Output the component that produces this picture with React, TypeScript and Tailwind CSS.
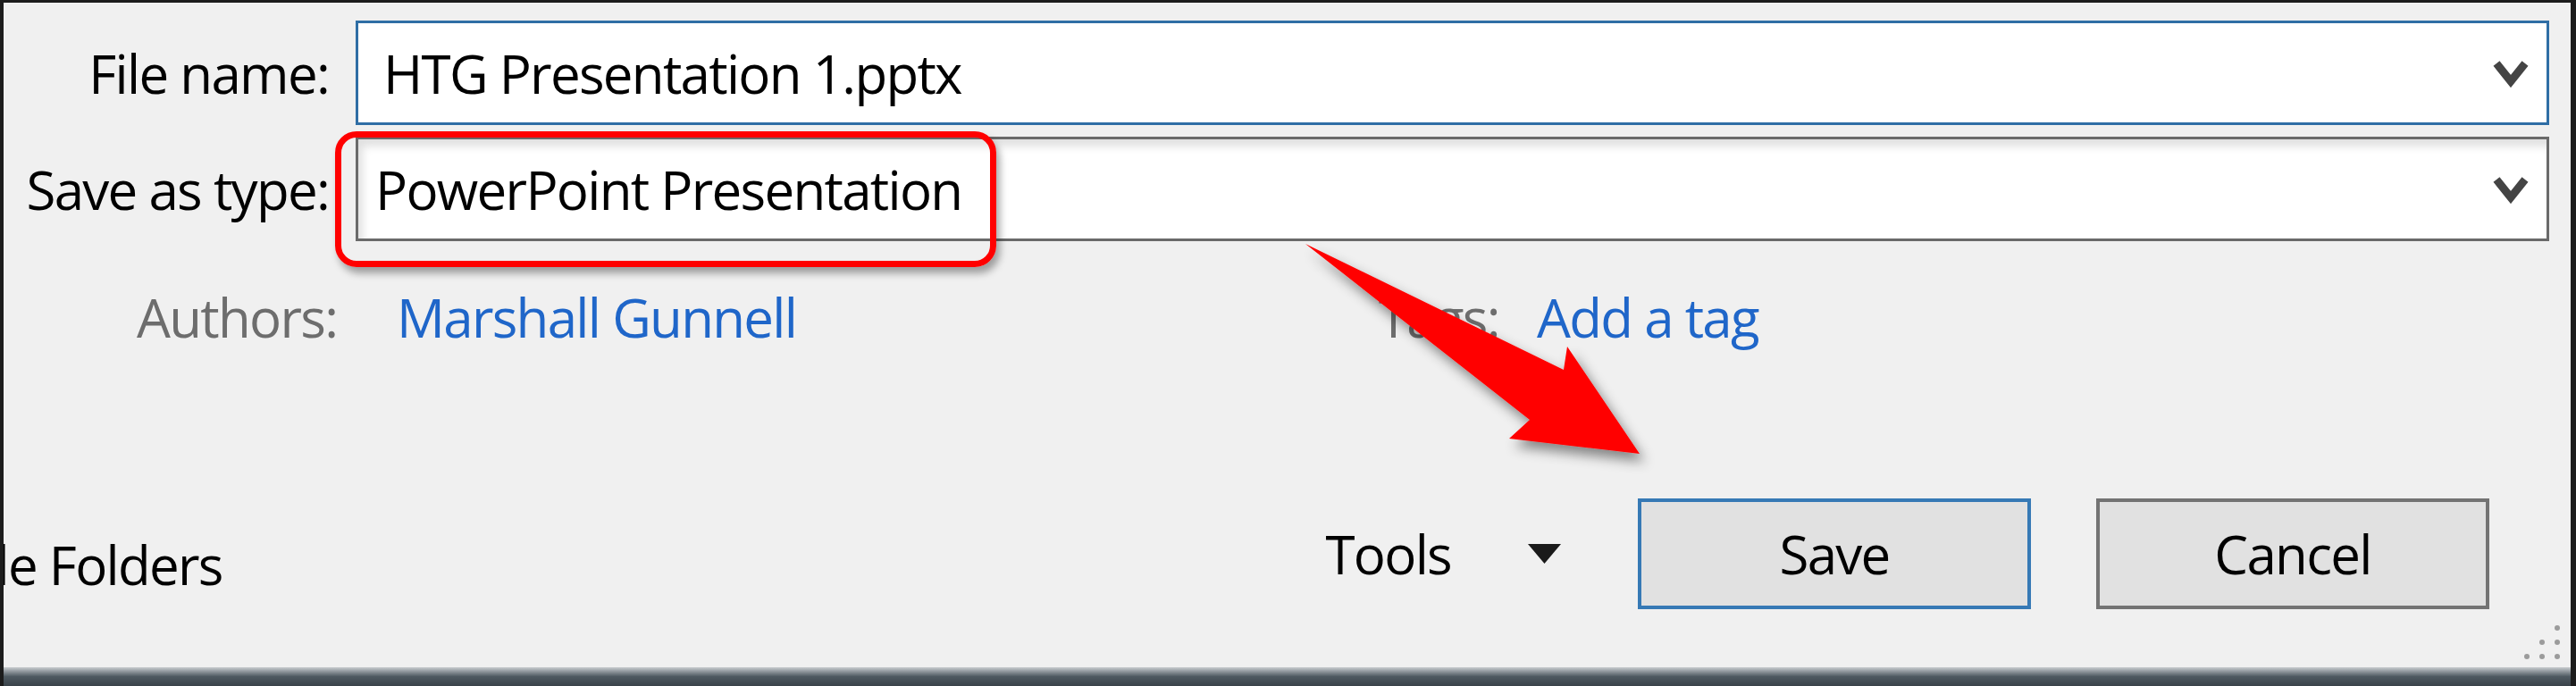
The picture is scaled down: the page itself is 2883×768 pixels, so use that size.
import { ReactNode } from 'react';

const font = "font-['Open_Sans',sans-serif] font-medium text-[60px] leading-none tracking-[-1.7px]";

function Chevron() {
  return (
    <svg width="40" height="32" viewBox="0 0 40 32" className="shrink-0">
      <polyline points="4,5 20,25 36,5" fill="none" stroke="#444" strokeWidth="9" strokeLinejoin="miter" />
    </svg>
  );
}

interface FieldRowProps {
  label: string;
  children: ReactNode;
  focused?: boolean;
  className?: string;
  textPad: string;
}

function FieldRow({ label, children, focused, className, textPad }: FieldRowProps) {
  return (
    <div className={`flex h-[117px] items-center gap-[30px] pr-[24px] ${className ?? ''}`}>
      <div className={`w-[364px] shrink-0 text-right text-black ${font}`}>{label}</div>
      <div
        className={`flex h-full flex-1 items-center bg-white pr-[20px] ${textPad} ${
          focused
            ? 'border-[3px] border-[#2f6ea5]'
            : 'border-[3px] border-[#6a6a6a] shadow-[inset_5px_8px_10px_rgba(0,0,0,0.12)]'
        }`}
      >
        <span className={`flex-1 text-black ${font}`}>{children}</span>
        <Chevron />
      </div>
    </div>
  );
}

function Dot() {
  return <span className="h-[6px] w-[6px] rounded-full bg-[#9b9b9b]" />;
}

export default function App() {
  return (
    <div className="relative flex h-[768px] w-[2883px] flex-col overflow-hidden border-t-[3px] border-l-[4px] border-r-[6px] border-[#1c1c1c] bg-[#f0f0f0]">
      <div className="flex flex-1 flex-col overflow-hidden pt-[20px]">
        <FieldRow label="File name:" focused textPad="pl-[28px]">
          HTG Presentation 1.pptx
        </FieldRow>
        <FieldRow label="Save as type:" className="mt-[13px]" textPad="pl-[19px]">
          PowerPoint Presentation
        </FieldRow>

        {/* properties */}
        <div className={`mt-[55px] flex h-[60px] items-center pl-[149px] ${font}`}>
          <span className="w-[291px] shrink-0 text-[#6d6d6d]">Authors:</span>
          <span className="w-[1099px] shrink-0 text-[#1f66c9]">Marshall Gunnell</span>
          <span className="w-[177px] shrink-0 text-[#6d6d6d]">Tags:</span>
          <span className="text-[#1f66c9]">Add a tag</span>
        </div>

        {/* buttons */}
        <div className="mt-[173px] flex h-[124px] items-center pr-[91px]">
          <div className={`-ml-[86px] whitespace-nowrap pt-[24px] text-black ${font}`}>Hide Folders</div>
          <div className="flex-1" />
          <span className={`text-black ${font}`}>Tools</span>
          <svg width="37" height="22" viewBox="0 0 37 22" className="ml-[86px] shrink-0">
            <polygon points="0,0 37,0 18.5,22" fill="#1a1a1a" />
          </svg>
          <button className={`ml-[86px] h-[124px] w-[440px] shrink-0 border-[4px] border-[#3679b5] bg-[#e1e1e1] text-black ${font}`}>
            Save
          </button>
          <button className={`ml-[73px] h-[124px] w-[440px] shrink-0 border-[4px] border-[#737373] bg-[#e1e1e1] text-black ${font}`}>
            Cancel
          </button>
        </div>

        {/* size grip */}
        <div className="mt-[18px] flex justify-end pr-[12px]">
          <div className="grid grid-cols-3 gap-x-[11px] gap-y-[10px]">
            <span />
            <span />
            <Dot />
            <span />
            <Dot />
            <Dot />
            <Dot />
            <Dot />
            <Dot />
          </div>
        </div>
      </div>

      <div className="h-[21px] shrink-0 bg-linear-to-b from-[#c9cdd0] via-[#4e5961] to-[#3a434a]" />

      {/* annotation: red highlight box */}
      <div className="pointer-events-none absolute left-[371px] top-[144px] h-[152px] w-[740px] rounded-[24px] border-[7px] border-[#ff0000] shadow-[4px_7px_9px_rgba(0,0,0,0.35)]" />

      {/* annotation: red arrow */}
      <svg
        className="pointer-events-none absolute left-[-4px] top-[-3px]"
        width="2883"
        height="768"
        viewBox="0 0 2883 768"
      >
        <defs>
          <filter id="arrowShadow" x="-20%" y="-20%" width="140%" height="140%">
            <feDropShadow dx="6" dy="9" stdDeviation="7" floodColor="#000" floodOpacity="0.45" />
          </filter>
        </defs>
        <polygon
          points="1461,273 1750,414 1754,388 1835,508 1689,491 1712,470"
          fill="#ff0000"
          filter="url(#arrowShadow)"
        />
      </svg>
    </div>
  );
}
